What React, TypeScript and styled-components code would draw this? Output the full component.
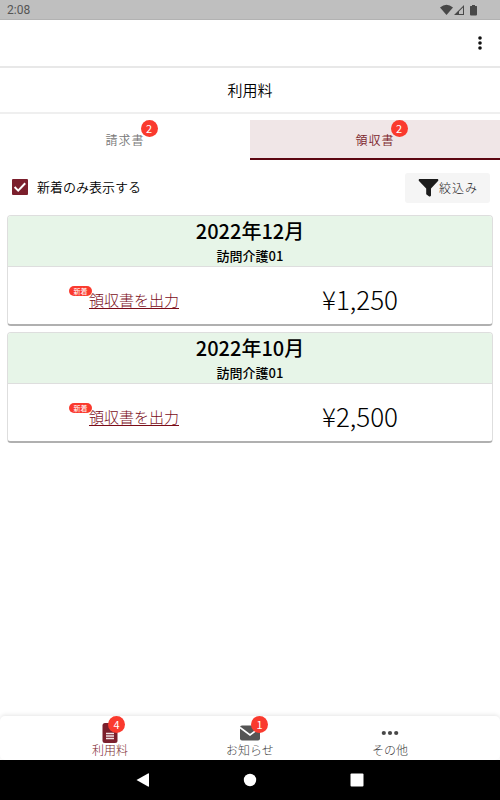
import React, { useState } from "react";
import styled, { createGlobalStyle } from "styled-components";

const GlobalStyle = createGlobalStyle`
  *, *::before, *::after { box-sizing: border-box; }
  body {
    margin: 0;
    background: #fff;
    color: #000;
    font-family: "Noto Sans CJK JP", "Noto Sans", sans-serif;
    font-weight: 300;
  }
  button { font-family: inherit; font-weight: inherit; border: 0; padding: 0; cursor: pointer; }
`;

const wine = "#7b1f2c";

const Screen = styled.div`
  min-height: 100vh;
  display: flex;
  flex-direction: column;
`;

const StatusBar = styled.div`
  height: 20px;
  padding: 0 22px 0 7px;
  display: flex;
  align-items: center;
  justify-content: space-between;
  background: #bfbfbf;
  border-bottom: 1px solid #b2b2b2;
  color: #555;
  font: 12px/20px Roboto, sans-serif;
`;

const StatusIcons = styled.svg`
  display: block;
`;

const AppBar = styled.header`
  height: 48px;
  padding-right: 10px;
  display: flex;
  align-items: center;
  justify-content: flex-end;
  border-bottom: 2px solid #e8e8e8;
`;

const MenuButton = styled.button`
  width: 20px;
  height: 30px;
  background: none;
  svg { display: block; margin: 0 auto; }
`;

const Title = styled.h1`
  margin: 0 0 6px;
  height: 46px;
  border-bottom: 2px solid #efefef;
  font-size: 15px;
  font-weight: 350;
  line-height: 43px;
  text-align: center;
`;

const Tabs = styled.div`
  display: grid;
  grid-template-columns: 1fr 1fr;
`;

const Tab = styled.button<{ $active: boolean }>`
  height: 40px;
  padding-top: 2px;
  background: ${(p) => (p.$active ? "#f0e6e7" : "transparent")};
  border-bottom: 2px solid ${(p) => (p.$active ? "#5c0612" : "transparent")};
  color: ${(p) => (p.$active ? wine : "#777")};
  font-size: 12px;
  font-weight: 350;
  line-height: 18px;
  letter-spacing: 1px;
`;

const Anchor = styled.span`
  position: relative;
  display: inline-block;
`;

const Badge = styled.span`
  position: absolute;
  top: -11px;
  left: calc(100% - 4px);
  width: 17px;
  height: 17px;
  border-radius: 50%;
  background: #fa3a2e;
  color: #fff;
  font-size: 11px;
  font-weight: 400;
  line-height: 17px;
  letter-spacing: 0;
  text-align: center;
`;

const Controls = styled.div`
  height: 55px;
  padding: 0 10px 0 12px;
  display: flex;
  align-items: center;
  justify-content: space-between;
`;

const CheckLabel = styled.label`
  padding-bottom: 2px;
  display: flex;
  align-items: center;
  gap: 9px;
  font-size: 13px;
  font-weight: 350;
  line-height: 20px;
`;

const CheckWrap = styled.span`
  display: grid;
  width: 16px;
  height: 16px;
  > * { grid-area: 1 / 1; }
  svg { pointer-events: none; }
`;

const CheckBox = styled.input`
  appearance: none;
  margin: 0;
  width: 16px;
  height: 16px;
  border: 2px solid ${wine};
  border-radius: 1px;
  &:checked { background: ${wine}; }
`;

const FilterButton = styled.button`
  height: 30px;
  padding: 0 12px 0 13px;
  display: flex;
  align-items: center;
  border-radius: 3px;
  background: #f5f5f5;
  color: #111;
  font-size: 12px;
  letter-spacing: 1px;
`;

const CardList = styled.main`
  flex: 1;
  padding: 0 7px;
  display: flex;
  flex-direction: column;
  gap: 6px;
`;

const Card = styled.article`
  border: 1px solid #dedede;
  border-bottom: 2px solid #b0b0b0;
  border-radius: 4px;
  overflow: hidden;
`;

const CardHeader = styled.header`
  height: 51px;
  background: #e7f5e8;
  border-bottom: 1px solid #dedede;
  text-align: center;
`;

const Month = styled.h2`
  margin: 0;
  font-size: 20px;
  font-weight: 500;
  line-height: 30px;
`;

const Service = styled.p`
  margin: 0;
  font-size: 13px;
  font-weight: 500;
  line-height: 20px;
`;

const CardBody = styled.div`
  height: 57px;
  padding: 6px 19px 0 13px;
  display: grid;
  grid-template-columns: 1fr 1fr;
  align-items: center;
  justify-items: center;
`;

const Receipt = styled.a`
  color: #7a0c18;
  font-size: 15px;
  line-height: 22px;
  text-underline-offset: 2px;
`;

const ReceiptCell = styled.div`
  position: relative;
`;

const NewTag = styled.span`
  position: absolute;
  top: -1px;
  left: -20px;
  z-index: 1;
  width: 23px;
  height: 10px;
  border-radius: 5px;
  background: #fa3a2e;
  color: #fff;
  font-size: 7px;
  font-weight: 400;
  line-height: 10px;
  text-align: center;
`;

const Price = styled.span`
  font-size: 26px;
  line-height: 30px;
`;

const BottomNav = styled.nav`
  height: 44px;
  padding: 0 8%;
  display: grid;
  grid-template-columns: repeat(3, 1fr);
  border-radius: 5px;
  box-shadow: 0 -1px 4px rgba(0, 0, 0, 0.1);
`;

const NavItem = styled.a<{ $active?: boolean }>`
  padding-top: 6px;
  display: flex;
  flex-direction: column;
  align-items: center;
  color: ${(p) => (p.$active ? wine : "#444")};
  font-size: 12px;
  line-height: 14px;
  text-decoration: none;
`;

const NavIcon = styled.span`
  position: relative;
  width: 22px;
  height: 21px;
  svg { display: block; }
`;

const NavBadge = styled(Badge)<{ $left: number }>`
  top: -6px;
  left: ${(p) => p.$left}px;
`;

const SystemBar = styled.div`
  height: 40px;
  padding: 0 18%;
  display: grid;
  grid-template-columns: repeat(3, 1fr);
  place-items: center;
  background: #000;
`;

const SystemButton = styled.button`
  width: 24px;
  height: 24px;
  background: none;
  svg { display: block; }
`;

const receipts = [
  { month: "2022年12月", service: "訪問介護01", price: "¥1,250" },
  { month: "2022年10月", service: "訪問介護01", price: "¥2,500" },
];

const tabs = ["請求書", "領収書"];

export default function App() {
  const [tab, setTab] = useState(1);
  const [onlyNew, setOnlyNew] = useState(true);

  return (
    <>
      <GlobalStyle />
      <Screen>
        <StatusBar>
          <span>2:08</span>
          <StatusIcons width="38" height="14" viewBox="0 0 38 14" fill="#484848" aria-hidden="true">
            <path d="M0 4.5Q6.5-.8 13 4.5L6.5 12Z" />
            <path fillRule="evenodd" d="M14 12 24 2V12ZM19 11H23V4.6L19 8.6Z" />
            <path d="M30.5 3H32V2H35V3H36.5Q37 3 37 3.5V11.5Q37 12.5 36 12.5H31Q30 12.5 30 11.5V3.5Q30 3 30.5 3Z" />
          </StatusIcons>
        </StatusBar>
        <AppBar>
          <MenuButton aria-label="メニュー">
            <svg width="4" height="14" viewBox="0 0 4 14" fill="#111">
              <circle cx="2" cy="2" r="1.8" />
              <circle cx="2" cy="7" r="1.8" />
              <circle cx="2" cy="12" r="1.8" />
            </svg>
          </MenuButton>
        </AppBar>
        <Title>利用料</Title>
        <Tabs role="tablist">
          {tabs.map((name, i) => (
            <Tab key={name} role="tab" aria-selected={tab === i} $active={tab === i} onClick={() => setTab(i)}>
              <Anchor>
                {name}
                <Badge>2</Badge>
              </Anchor>
            </Tab>
          ))}
        </Tabs>
        <Controls>
          <CheckLabel>
            <CheckWrap>
              <CheckBox type="checkbox" checked={onlyNew} onChange={(e) => setOnlyNew(e.target.checked)} />
              {onlyNew && (
                <svg width="16" height="16" viewBox="0 0 16 16" fill="none" stroke="#fff" strokeWidth="2">
                  <path d="M2.6 8 6.2 11.6 13.2 4.2" />
                </svg>
              )}
            </CheckWrap>
            新着のみ表示する
          </CheckLabel>
          <FilterButton>
            <svg width="21" height="18" viewBox="0 0 21 18" fill="#1c1c1c" aria-hidden="true">
              <path d="M1.2 0H19.8Q21 .8 20 2L13 9.6V16.6Q12.4 18 11.2 17.4L8.2 15.2V9.6L1 2Q0 .8 1.2 0Z" />
            </svg>
            絞込み
          </FilterButton>
        </Controls>
        <CardList>
          {receipts.map((r) => (
            <Card key={r.month}>
              <CardHeader>
                <Month>{r.month}</Month>
                <Service>{r.service}</Service>
              </CardHeader>
              <CardBody>
                <ReceiptCell>
                  <NewTag>新着</NewTag>
                  <Receipt href="#receipt">領収書を出力</Receipt>
                </ReceiptCell>
                <Price>{r.price}</Price>
              </CardBody>
            </Card>
          ))}
        </CardList>
        <BottomNav>
          <NavItem href="#fees" $active>
            <NavIcon>
              <svg width="22" height="21" viewBox="0 0 22 21">
                <path d="M6 1H11L18.5 8V18.5Q18.5 21 16 21H6Q3.5 21 3.5 18.5V3.5Q3.5 1 6 1Z" fill={wine} />
                <path d="M7 11.5H15M7 14H15M7 16.5H15" stroke="#f1e4e5" strokeWidth="1.3" />
              </svg>
              <NavBadge $left={9}>4</NavBadge>
            </NavIcon>
            利用料
          </NavItem>
          <NavItem href="#notices">
            <NavIcon>
              <svg width="22" height="21" viewBox="0 0 22 21">
                <rect x="1" y="3.5" width="20" height="15" rx="2" fill="#555" />
                <path d="M1 5.5 11 13 21 5.5" fill="none" stroke="#fff" strokeWidth="1.6" />
              </svg>
              <NavBadge $left={12}>1</NavBadge>
            </NavIcon>
            お知らせ
          </NavItem>
          <NavItem href="#other">
            <NavIcon>
              <svg width="22" height="21" viewBox="0 0 22 21" fill="#484848">
                <circle cx="4.8" cy="11" r="2.1" />
                <circle cx="11" cy="11" r="2.1" />
                <circle cx="17.2" cy="11" r="2.1" />
              </svg>
            </NavIcon>
            その他
          </NavItem>
        </BottomNav>
        <SystemBar>
          <SystemButton aria-label="戻る">
            <svg width="24" height="24" viewBox="0 0 24 24" fill="#fff">
              <path d="M5.5 12 17 5.5Q18 5 18 6V18Q18 19 17 18.5Z" />
            </svg>
          </SystemButton>
          <SystemButton aria-label="ホーム">
            <svg width="24" height="24" viewBox="0 0 24 24" fill="#fff">
              <circle cx="12" cy="12" r="6.2" />
            </svg>
          </SystemButton>
          <SystemButton aria-label="履歴">
            <svg width="24" height="24" viewBox="0 0 24 24" fill="#fff">
              <rect x="5.5" y="5.5" width="13" height="13" rx="1" />
            </svg>
          </SystemButton>
        </SystemBar>
      </Screen>
    </>
  );
}
